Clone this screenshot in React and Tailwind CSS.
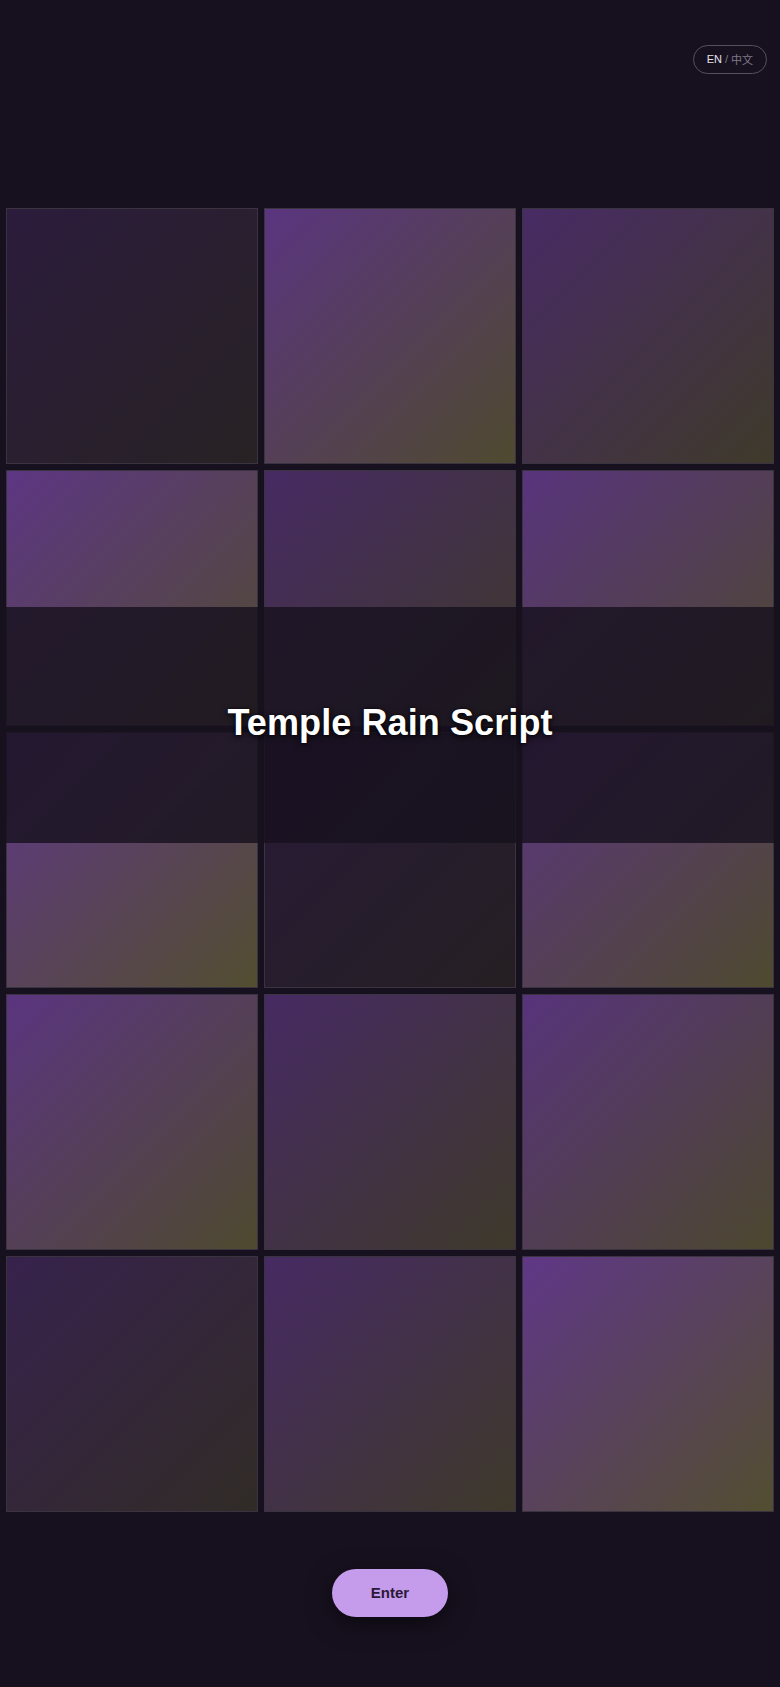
import React from "react";

const tiles = [
  "opacity-[0.18]", "opacity-[0.6]", "opacity-[0.43]",
  "opacity-[0.62]", "opacity-[0.42]", "opacity-[0.58]",
  "opacity-[0.64]", "opacity-[0.15]", "opacity-[0.6]",
  "opacity-[0.6]", "opacity-[0.42]", "opacity-[0.57]",
  "opacity-[0.28]", "opacity-[0.42]", "opacity-[0.64]",
];

export default function App() {
  return (
    <div className="min-h-screen w-full bg-[#17111f] font-['Liberation_Sans',Arial,'Noto_Sans_CJK_SC',sans-serif] flex flex-col">
      <div className="flex justify-end pt-[45px] pr-[13px]">
        <button className="h-[29px] px-[13px] rounded-full border border-[#56505e] flex items-center gap-[3px] text-[11px] leading-none">
          <span className="text-[#e6e2ec]">EN</span>
          <span className="text-[#7f7a88]">/</span>
          <span className="text-[#7f7a88] font-['Noto_Sans_CJK_SC',sans-serif]">中文</span>
        </button>
      </div>

      <div className="relative mt-[134px] px-[6px]">
        <div className="grid grid-cols-3 gap-[6px]">
          {tiles.map((op, i) => (
            <div key={i} className="h-[256px] border border-white/15 bg-[#17111f]">
              <div className={"h-full w-full bg-[linear-gradient(135deg,#884dc1,#74703a)] " + op} />
            </div>
          ))}
        </div>
        <div className="absolute inset-x-0 top-[399px] h-[236px] bg-[#17111f]/[0.82] flex items-center justify-center">
          <h1 className="text-white font-bold text-[36px] leading-none tracking-[0.1px] -mt-[4px] [text-shadow:0_2px_6px_rgba(0,0,0,0.9),0_0_2px_rgba(0,0,0,0.9)]">
            Temple Rain Script
          </h1>
        </div>
      </div>

      <div className="flex justify-center mt-[57px] pb-[70px]">
        <button className="h-[48px] w-[116px] rounded-full bg-[#c59ceb] text-[#2a1838] text-[15px] font-bold shadow-[0_6px_24px_rgba(0,0,0,0.55)]">
          Enter
        </button>
      </div>
    </div>
  );
}
